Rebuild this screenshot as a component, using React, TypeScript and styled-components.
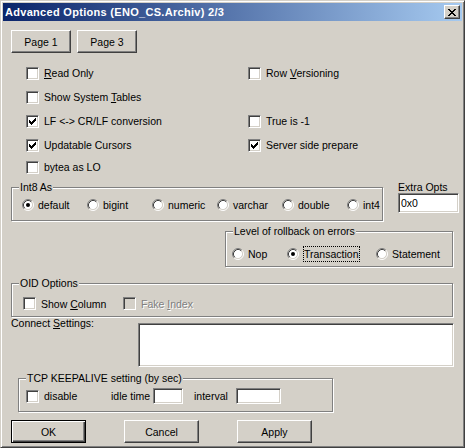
import React from "react";
import styled, { createGlobalStyle, css } from "styled-components";

const GlobalStyle = createGlobalStyle`
  html, body {
    margin: 0;
    padding: 0;
    background: #d4d0c8;
  }
  body {
    font-family: "Liberation Sans", Arial, sans-serif;
    font-size: 10.5px;
    color: #000;
  }
`;

const Window = styled.div`
  width: 465px;
  height: 448px;
  box-sizing: border-box;
  border: 1px solid;
  border-color: #d4d0c8 #404040 #404040 #d4d0c8;
  box-shadow: inset 1px 1px #fff, inset -1px -1px #808080;
  padding: 2px;
  display: flex;
  flex-direction: column;
  background: #d4d0c8;
`;

const TitleBar = styled.div`
  height: 18px;
  display: flex;
  align-items: center;
  justify-content: space-between;
  padding: 0 2px;
  background: linear-gradient(to right, #0a246a, #a6caf0);
  color: #fff;
  font-weight: bold;
  font-size: 11px;
  letter-spacing: 0.3px;
  white-space: nowrap;
`;

const CloseButton = styled.div`
  width: 16px;
  height: 14px;
  box-sizing: border-box;
  background: #d4d0c8;
  border: 1px solid;
  border-color: #fff #404040 #404040 #fff;
  box-shadow: inset -1px -1px #808080;
  display: flex;
  align-items: center;
  justify-content: center;
`;

const Body = styled.div`
  display: flex;
  flex-direction: column;
  padding: 9px 8px 0 8px;
`;

const ButtonRow = styled.div<{ $gap: number }>`
  display: flex;
  gap: ${(p) => p.$gap}px;
`;

const Button = styled.button<{ $w: number; $default?: boolean }>`
  width: ${(p) => p.$w}px;
  height: 23px;
  box-sizing: border-box;
  padding: 0;
  background: #d4d0c8;
  font-family: inherit;
  font-size: 10.5px;
  color: #000;
  border: 1px solid;
  border-color: #fff #404040 #404040 #fff;
  box-shadow: inset -1px -1px #808080;
  ${(p) =>
    p.$default &&
    css`
      border-color: #000;
      box-shadow: inset 1px 1px #fff, inset -1px -1px #404040,
        inset -2px -2px #808080;
    `}
`;

const OptionGrid = styled.div`
  display: grid;
  grid-template-columns: 222px 1fr;
  grid-template-rows: 24px 24px 24px 24px 20px;
  align-items: center;
  padding-left: 15px;
  margin-top: 8px;
`;

const CheckItem = styled.label<{ $w?: number; $disabled?: boolean }>`
  display: flex;
  align-items: center;
  gap: 5px;
  height: 13px;
  white-space: nowrap;
  ${(p) => p.$w && `width: ${p.$w}px; flex: none;`}
  ${(p) => p.$disabled && `color: #808080; text-shadow: 1px 1px #fff;`}
`;

const Box = styled.span<{ $disabled?: boolean }>`
  width: 13px;
  height: 13px;
  box-sizing: border-box;
  flex: none;
  border: 1px solid;
  border-color: #808080 #fff #fff #808080;
  box-shadow: inset 1px 1px #404040, inset -1px -1px #d4d0c8;
  background: ${(p) => (p.$disabled ? "#d4d0c8" : "#fff")};
  display: flex;
  align-items: center;
  justify-content: center;
`;

const RadioItem = styled.label`
  display: flex;
  align-items: center;
  gap: 4px;
  height: 13px;
  white-space: nowrap;
`;

const U = styled.span`
  text-decoration: underline;
`;

const Group = styled.div<{ $w?: number; $pad: string }>`
  position: relative;
  box-sizing: border-box;
  border: 1px solid #808080;
  box-shadow: inset 1px 1px #fff, 1px 1px #fff;
  padding: ${(p) => p.$pad};
  ${(p) => p.$w && `width: ${p.$w}px; flex: none;`}
`;

const Legend = styled.span`
  position: absolute;
  top: -7px;
  left: 7px;
  padding: 0 1px;
  line-height: 12px;
  background: #d4d0c8;
  white-space: nowrap;
`;

const RadioGrid = styled.div<{ $cols: string }>`
  display: grid;
  grid-template-columns: ${(p) => p.$cols};
  align-items: center;
`;

const Int8Row = styled.div`
  display: flex;
  align-items: flex-start;
  margin-top: 4px;
`;

const ExtraCol = styled.div`
  display: flex;
  flex-direction: column;
  margin-left: 15px;
  line-height: 12px;
`;

const Field = styled.div<{ $w: number; $h: number }>`
  width: ${(p) => p.$w}px;
  height: ${(p) => p.$h}px;
  box-sizing: border-box;
  flex: none;
  border: 1px solid;
  border-color: #808080 #fff #fff #808080;
  box-shadow: inset 1px 1px #404040, inset -1px -1px #d4d0c8;
  background: #fff;
  padding: 3px 2px;
  line-height: 12px;
`;

const Focus = styled.span`
  border: 1px dotted #000;
  padding: 1px 1px 1px 0;
`;

const ConnectRow = styled.div`
  display: flex;
  align-items: flex-start;
  margin-top: 6px;
`;

const FieldLabel = styled.span<{ $w: number }>`
  width: ${(p) => p.$w}px;
  flex: none;
  white-space: nowrap;
`;

const InlineRow = styled.div`
  display: flex;
  align-items: center;
  height: 16px;
`;

const Check = ({ on }: { on?: boolean }) => {
  // 7 columns, each a 3px vertical run
  const tops = [2, 3, 4, 3, 2, 1, 0];
  return (
    <svg width="7" height="7" viewBox="0 0 7 7" shapeRendering="crispEdges">
      {on &&
        tops.map((t, i) => (
          <rect key={i} x={i} y={t} width="1" height="3" fill="#000" />
        ))}
    </svg>
  );
};

const Checkbox = ({
  label,
  checked,
  disabled,
  w,
}: {
  label: React.ReactNode;
  checked?: boolean;
  disabled?: boolean;
  w?: number;
}) => (
  <CheckItem $w={w} $disabled={disabled}>
    <Box $disabled={disabled}>
      <Check on={checked} />
    </Box>
    <span>{label}</span>
  </CheckItem>
);

const Radio = ({
  label,
  checked,
}: {
  label: React.ReactNode;
  checked?: boolean;
}) => (
  <RadioItem>
    <svg width="12" height="12" viewBox="0 0 12 12" style={{ flex: "none" }}>
      <circle cx="6" cy="6" r="4.5" fill="#fff" />
      <path d="M2.11 9.89 A5.5 5.5 0 0 1 9.89 2.11" stroke="#808080" fill="none" />
      <path d="M9.89 2.11 A5.5 5.5 0 0 1 2.11 9.89" stroke="#fff" fill="none" />
      <path d="M2.82 9.18 A4.5 4.5 0 0 1 9.18 2.82" stroke="#404040" fill="none" />
      <path d="M9.18 2.82 A4.5 4.5 0 0 1 2.82 9.18" stroke="#d4d0c8" fill="none" />
      {checked && <circle cx="6" cy="6" r="2" fill="#000" />}
    </svg>
    <span>{label}</span>
  </RadioItem>
);

const CloseGlyph = () => (
  <svg width="8" height="7" viewBox="0 0 8 7" shapeRendering="crispEdges">
    <path
      d="M0 0h2v1h-2z M6 0h2v1h-2z M1 1h2v1h-2z M5 1h2v1h-2z M2 2h4v1h-4z M3 3h2v1h-2z M2 4h4v1h-4z M1 5h2v1h-2z M5 5h2v1h-2z M0 6h2v1h-2z M6 6h2v1h-2z"
      fill="#000"
    />
  </svg>
);

const App: React.FC = () => {
  return (
    <Window>
      <GlobalStyle />
      <TitleBar>
        <span>Advanced Options (ENO_CS.Archiv) 2/3</span>
        <CloseButton>
          <CloseGlyph />
        </CloseButton>
      </TitleBar>

      <Body>
        <ButtonRow $gap={6}>
          <Button $w={60}>Page 1</Button>
          <Button $w={60}>Page 3</Button>
        </ButtonRow>

        <OptionGrid>
          <Checkbox label={<><U>R</U>ead Only</>} />
          <Checkbox label={<>Row <U>V</U>ersioning</>} />
          <Checkbox label={<>Show System <U>T</U>ables</>} />
          <span />
          <Checkbox label="LF <-> CR/LF conversion" checked />
          <Checkbox label="True is -1" />
          <Checkbox label="Updatable Cursors" checked />
          <Checkbox label="Server side prepare" checked />
          <Checkbox label="bytea as LO" />
          <span />
        </OptionGrid>

        <Int8Row>
          <Group $w={372} $pad="10px 0 9px 10px" style={{ marginTop: 6 }}>
            <Legend>Int8 As</Legend>
            <RadioGrid $cols="repeat(6, 65px)">
              <Radio label="default" checked />
              <Radio label="bigint" />
              <Radio label="numeric" />
              <Radio label="varchar" />
              <Radio label="double" />
              <Radio label="int4" />
            </RadioGrid>
          </Group>
          <ExtraCol>
            <span>Extra Opts</span>
            <Field $w={61} $h={20}>0x0</Field>
          </ExtraCol>
        </Int8Row>

        <Group
          $w={228}
          $pad="15px 0 6px 6px"
          style={{ alignSelf: "flex-end", marginTop: 10, marginRight: 1 }}
        >
          <Legend>Level of rollback on errors</Legend>
          <RadioGrid $cols="55px 89px auto">
            <Radio label="Nop" />
            <Radio label={<Focus>Transaction</Focus>} checked />
            <Radio label="Statement" />
          </RadioGrid>
        </Group>

        <Group $pad="13px 0 6px 11px" style={{ marginTop: 16, marginRight: 1 }}>
          <Legend>OID Options</Legend>
          <InlineRow style={{ height: 13 }}>
            <Checkbox label={<>Show <U>C</U>olumn</>} w={100} />
            <Checkbox label={<>Fake <U>I</U>ndex</>} disabled />
          </InlineRow>
        </Group>

        <ConnectRow>
          <FieldLabel $w={127} style={{ marginTop: -6 }}>
            Connect <U>S</U>ettings:
          </FieldLabel>
          <Field $w={316} $h={44} />
        </ConnectRow>

        <Group $w={315} $pad="9px 0 7px 7px" style={{ marginTop: 11, marginLeft: 7 }}>
          <Legend>TCP KEEPALIVE setting (by sec)</Legend>
          <InlineRow>
            <Checkbox label="disable" w={85} />
            <FieldLabel $w={42}>idle time</FieldLabel>
            <Field $w={30} $h={16} />
            <FieldLabel $w={42} style={{ marginLeft: 11 }}>
              interval
            </FieldLabel>
            <Field $w={45} $h={16} />
          </InlineRow>
        </Group>

        <ButtonRow $gap={38} style={{ marginTop: 8 }}>
          <Button $w={75} $default>
            OK
          </Button>
          <Button $w={75}>Cancel</Button>
          <Button $w={75}>Apply</Button>
        </ButtonRow>
      </Body>
    </Window>
  );
};

export default App;
